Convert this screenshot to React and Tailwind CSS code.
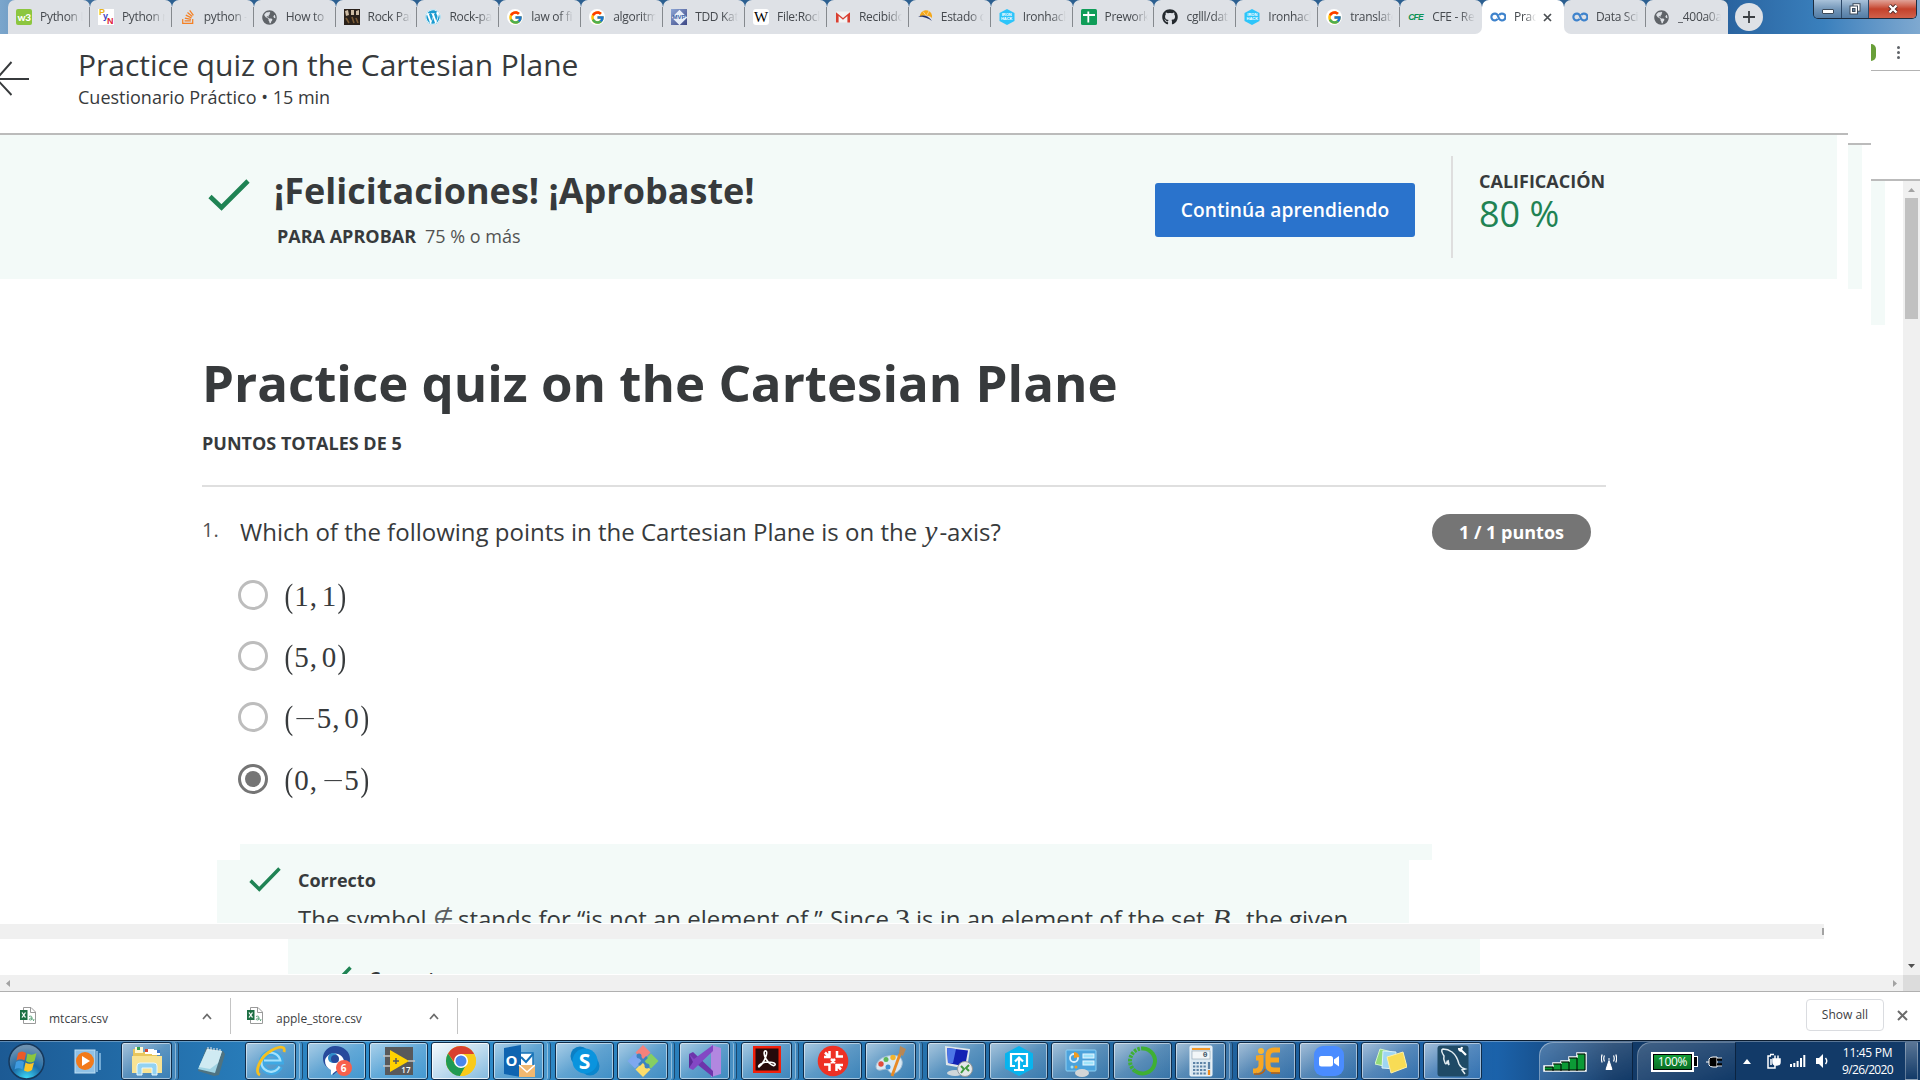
import React from 'react';
import { FcGoogle } from 'react-icons/fc';
import { FaGithub, FaWordpress, FaStackOverflow, FaGlobeAmericas } from 'react-icons/fa';

/* ---------- favicons ---------- */
const W3 = () => (
  <span className="flex size-4 items-center justify-center rounded-[2px] bg-[#8cc63f] font-['Lato'] text-[10px] font-black leading-none tracking-[-0.5px] text-white">w3</span>
);
const PyN = () => (
  <span className="relative block size-4 bg-white font-['Liberation_Sans'] text-[9px] font-bold leading-none">
    <span className="absolute left-[1px] top-[-1px] text-[#e8b51c]">P</span>
    <span className="absolute left-[5px] top-[3px] text-[#3b3fc4]">y</span>
    <span className="absolute left-[9px] top-[8px] text-[#e0203a]">N</span>
  </span>
);
const RockPic = () => (
  <svg className="size-4" viewBox="0 0 16 16">
    <rect width="16" height="16" fill="#2a211a" />
    <path d="M1 2l3-1 1 5-3 1z M7 1h3v5H7z M12 2l3-1v5h-3z" fill="#cdbca4" />
    <path d="M2 9l3 5M8 8l2 6M12 9l2 5" stroke="#7a5b36" strokeWidth="1.600" />
  </svg>
);
const Google = () => (
  <span className="flex size-4 items-center justify-center rounded-full bg-white"><FcGoogle className="size-[15px]" /></span>
);
const Mvp = () => (
  <span className="relative flex size-4 items-center justify-center bg-linear-to-br from-[#8ea6d6] to-[#3d4785]">
    <span className="absolute size-[11px] rotate-45 bg-[#e6edf8]" />
    <span className="relative font-['Liberation_Sans'] text-[6px] font-bold leading-none text-[#3d64a6]">MVP</span>
  </span>
);
const Wiki = () => (
  <span className="flex size-4 items-center justify-center rounded-[3px] bg-white font-['Liberation_Serif'] text-[15px] leading-none text-black">W</span>
);
const Gmail = () => (
  <svg className="size-4" viewBox="0 0 16 16">
    <rect x="1" y="2.500" width="14" height="11" fill="#f2f2f2" />
    <path d="M1 3.200L8 9l7-5.800V13.500h-2.600V7L8 10.800 3.600 7v6.500H1z" fill="#d93f31" />
  </svg>
);
const Estado = () => (
  <svg className="size-4" viewBox="0 0 16 16">
    <path d="M3 8a5.500 5.500 0 0 1 12-1.500V9C11.500 6 7 6 3 8z" fill="#f5a81c" />
    <path d="M6 2.500l3 4M12 2l-2 4" stroke="#fff" strokeWidth=".5" />
    <path d="M1 7.500c5-2 10-1.500 14 4.500-4-3-8-4.500-14-4.500z" fill="#1f2f6b" />
  </svg>
);
const Iron = () => (
  <span className="relative flex size-4 items-center justify-center">
    <svg className="absolute size-4" viewBox="0 0 16 16"><path d="M8 0l7.500 4v8L8 16 .5 12V4z" fill="#2dc5fa" /></svg>
    <span className="relative text-center font-['Liberation_Sans'] text-[4px] font-bold leading-[4px] text-white">IRON<br />HACK</span>
  </span>
);
const Sheet = () => (
  <svg className="size-4" viewBox="0 0 16 16"><rect width="16" height="16" rx="1.500" fill="#0f9d58" /><path d="M7.300 2.500v11M2 6h12" stroke="#fff" strokeWidth="1.800" /></svg>
);
const Cfe = () => (
  <span className="block w-4 font-['Liberation_Sans'] text-[8.500px] font-bold italic leading-4 tracking-[-0.700px] text-[#0a9153]">CFE</span>
);
const Coursera = () => (
  <svg className="size-4" viewBox="0 0 16 16" fill="none" stroke="#3f83cc" strokeWidth="2.200">
    <path d="M7.600 9.900A3.400 3.400 0 1 1 7.600 6.100L9.200 9.900A3.400 3.400 0 1 0 9.200 6.100" />
  </svg>
);
const Globe = () => <FaGlobeAmericas className="size-[15px] text-[#5f6368]" />;

const TABS = [
  ['Python L', <W3 />], ['Python n', <PyN />], ['python -', <FaStackOverflow className="size-4 text-[#f48024]" />],
  ['How to', <Globe />], ['Rock Pap', <RockPic />], ['Rock-pap', <FaWordpress className="size-4 rounded-full bg-white text-[#1b9bd0]" />],
  ['law of fi', <Google />], ['algoritm', <Google />], ['TDD Kata', <Mvp />], ['File:Rock', <Wiki />],
  ['Recibido', <Gmail />], ['Estado d', <Estado />], ['Ironhack', <Iron />], ['Prework', <Sheet />],
  ['cglll/dat', <FaGithub className="size-4 text-[#24292e]" />], ['Ironhack', <Iron />], ['translate', <Google />],
  ['CFE - Re', <Cfe />], ['Prac', <Coursera />], ['Data Sci', <Coursera />], ['_400a0a', <Globe />],
];
const ACTIVE = 18;

function Tab({ label, icon, i }) {
  const active = i === ACTIVE;
  const beside = i === ACTIVE - 1 || i === ACTIVE + 1;
  return (
    <div className={beside ? 'h-full w-[81.900px] shrink-0 bg-linear-to-b from-[#2c5f90] from-50% to-white to-50%' : 'h-full w-[81.900px] shrink-0'}>
      <div className={
        'flex h-full items-center rounded-t-[7px] pl-2 ' +
        (active ? 'bg-white' : 'bg-[#dee1e6]') +
        (i === ACTIVE - 1 ? ' rounded-br-[7px]' : '') + (i === ACTIVE + 1 ? ' rounded-bl-[7px]' : '')
      }>
        <span className="flex size-4 shrink-0 items-center justify-center">{icon}</span>
        <span className={
          'ml-2 overflow-hidden whitespace-nowrap text-[12px] leading-5 tracking-[-0.300px] text-[#45494e] ' +
          (active ? 'w-[22px] mask-r-from-50%' : 'w-[43px] mask-r-from-65%')
        }>{label}</span>
        {active && (
          <svg className="ml-[7px] size-[9px]" viewBox="0 0 9 9"><path d="M1 1l7 7M8 1L1 8" stroke="#4a4e52" strokeWidth="1.700" /></svg>
        )}
        {!active && i !== ACTIVE - 1 && i !== TABS.length - 1 && <span className="ml-auto h-5 w-px bg-[#85898e]" />}
      </div>
    </div>
  );
}

function TabStrip() {
  return (
    <div className="flex h-[34px] bg-linear-to-r from-[#7ba6cc] from-0% via-[#2c5f90] via-6% to-[#2c5f90]">
      <div className="w-[8px] shrink-0" />
      {TABS.map(([label, icon], i) => <Tab key={i} i={i} label={label} icon={icon} />)}
      <div className="flex flex-1 items-start bg-linear-to-r from-[#2a64a0] via-[#3a80bd] to-[#7fa9d0]">
        <span className="ml-[7px] mt-[3px] flex size-7 items-center justify-center rounded-full bg-[#dee1e6]">
          <svg className="size-3" viewBox="0 0 12 12"><path d="M6 0v12M0 6h12" stroke="#3b3f43" strokeWidth="1.800" /></svg>
        </span>
        <div className="ml-auto mr-[3px] flex h-[19px] w-[104px] overflow-hidden rounded-b-[5px] border border-t-0 border-[#1b2c40]">
          <span className="flex w-7 items-center justify-center border-r border-[#2b4767] bg-linear-to-b from-[#a9c2da] via-[#7497b9] via-50% to-[#537ca5]">
            <span className="mt-1 h-[5px] w-3 rounded-[1px] border border-[#3c4a5a] bg-white" />
          </span>
          <span className="flex w-[27px] items-center justify-center border-r border-[#2b4767] bg-linear-to-b from-[#a9c2da] via-[#7497b9] via-50% to-[#537ca5]">
            <svg className="size-3" viewBox="0 0 12 12"><rect x="4" y=".7" width="7" height="7.500" fill="#fff" stroke="#3c4a5a" /><rect x="1" y="3" width="7.500" height="8" fill="#fff" stroke="#3c4a5a" /><rect x="3.500" y="5.500" width="2.500" height="3" fill="#6c8aa8" stroke="#3c4a5a" /></svg>
          </span>
          <span className="flex flex-1 items-center justify-center bg-linear-to-b from-[#e0a298] via-[#c4412b] via-50% to-[#d0604a]">
            <svg className="size-3" viewBox="0 0 12 12"><path d="M2.500 2.500l7 7M9.500 2.500l-7 7" stroke="#4a2a2a" strokeWidth="4" /><path d="M2.500 2.500l7 7M9.500 2.500l-7 7" stroke="#fff" strokeWidth="2.400" /></svg>
          </span>
        </div>
      </div>
    </div>
  );
}

/* ---------- quiz page ---------- */
const Check = ({ className }) => (
  <svg className={className} viewBox="0 0 42 32" preserveAspectRatio="none" fill="none">
    <path d="M2 17.500L13.500 28.500 40 2" stroke="#1f8354" strokeWidth="4.600" />
  </svg>
);

const Paren = ({ children }) => <span className="inline-block w-[0.389em] text-center"><span className="inline-block origin-[50%_62%] scale-x-90 scale-y-[1.14]">{children}</span></span>;
const Digit = ({ children }) => <span className="inline-block w-[0.5em] text-center">{children}</span>;
const Comma = () => <span className="inline-block w-[0.445em] pl-[0.03em]">,</span>;
const Minus = () => <span className="inline-block w-[0.778em] text-center"><span className="inline-block origin-[50%_60%] scale-x-[1.3] scale-y-75">−</span></span>;
const Num = ({ n }) => (n < 0 ? <><Minus /><Digit>{-n}</Digit></> : <Digit>{n}</Digit>);

function Option({ x, y, checked }) {
  return (
    <div className="flex h-[61.400px] items-center">
      <span className={'flex size-[30px] items-center justify-center rounded-full border-[3px] ' + (checked ? 'border-[#757575]' : 'border-[#bdbdbd]')}>
        {checked && <span className="size-4 rounded-full bg-[#757575]" />}
      </span>
      <span className="ml-[15px] mt-[2px] whitespace-nowrap font-['Liberation_Serif'] text-[29px] leading-9">
        <Paren>(</Paren><Num n={x} /><Comma /><Num n={y} /><Paren>)</Paren>
      </span>
    </div>
  );
}

function Quiz() {
  return (
    <div className="flex h-full w-[1848px] flex-col overflow-hidden bg-white text-[#373a3c]">
      <div className="flex h-[101px] border-b-2 border-[#bbbbbb]">
        <svg className="mt-[26px] h-9 w-[79px] shrink-0" viewBox="0 0 79 36" fill="none" stroke="#373a3c" strokeWidth="1.900"><path d="M-6 19H29M11.500 2L-3.500 19 11.500 35" /></svg>
        <div className="-ml-px pt-[11px]">
          <h1 className="text-[30px] leading-10">Practice quiz on the Cartesian Plane</h1>
          <p className="text-[18px] leading-6">Cuestionario Práctico • 15 min</p>
        </div>
      </div>

      <div className="flex h-[144px] w-[1837px] bg-[#f3faf8]">
        <Check className="ml-[208px] mt-11 h-8 w-[42px]" />
        <div className="ml-6 w-[881px] pt-8">
          <h2 className="text-[36px] font-bold leading-[48px]">¡Felicitaciones! ¡Aprobaste!</h2>
          <p className="ml-[3px] mt-[9px] text-[18px] leading-6"><b>PARA APROBAR</b><span className="ml-[9px] text-[#525252]">75 % o más</span></p>
        </div>
        <button className="mt-12 h-[54px] w-[260px] rounded-[3px] bg-[#2a73cc] text-[19.200px] font-semibold text-white">Continúa aprendiendo</button>
        <div className="ml-9 mt-[21px] h-[102px] w-[2px] bg-[#dedede]" />
        <div className="ml-[26px] pt-[34px]">
          <div className="text-[18px] font-bold leading-6">CALIFICACIÓN</div>
          <div className="text-[36px] leading-[42px] text-[#1f8354]">80 %</div>
        </div>
      </div>

      <div className="ml-[202px] h-[565px] w-[1404px] pt-[73px]">
        <h2 className="text-[51px] font-bold leading-[60px]">Practice quiz on the Cartesian Plane</h2>
        <div className="mt-[19px] text-[18px] font-bold leading-6">PUNTOS TOTALES DE 5</div>
        <div className="mt-[30px] h-[2px] bg-[#dfdfdf]" />
        <div className="mt-[27px] flex h-9">
          <span className="w-[38px] text-[20px] leading-[31px] text-[#525252]">1.</span>
          <p className="text-[24px] leading-9">
            Which of the following points in the Cartesian Plane is on the <span className="inline-block w-[16px] pl-[1px] font-['Liberation_Serif'] text-[29px] italic leading-none">y</span>-axis?
          </p>
          <span className="ml-auto mr-[15px] flex h-9 w-[159px] items-center justify-center rounded-full bg-[#757575] text-[18px] font-bold text-white">1 / 1 puntos</span>
        </div>
        <div className="ml-[36px] mt-[14px]">
          <Option x={1} y={1} />
          <Option x={5} y={0} />
          <Option x={-5} y={0} />
          <Option x={0} y={-5} checked />
        </div>
      </div>

      <div className="ml-[240px] h-4 w-[1192px] bg-[#f3faf8]" />
      <div className="ml-[217px] flex h-[63px] w-[1192px] overflow-hidden bg-[#f3faf8]">
        <Check className="ml-8 mt-[7px] h-[25px] w-8 shrink-0" />
        <div className="ml-[17px] pt-2">
          <div className="text-[18px] font-bold leading-6">Correcto</div>
          <p className="mt-[9px] flex whitespace-nowrap text-[24px] leading-9">
            <span className="w-[135px]">The symbol</span>
            <span className="w-[25px] font-['DejaVu_Sans'] text-[24px] font-extralight italic text-[#5c5f61]">∉</span>
            <span className="w-[372px]">stands for “is not an element of.”</span>
            <span className="w-[65px]">Since</span>
            <span className="w-[21px] font-['Liberation_Serif'] text-[30px]">3</span>
            <span className="w-[296px]">is in an element of the set</span>
            <span className="w-[34px] font-['Liberation_Serif'] text-[30px] italic">B,</span>
            <span>the given</span>
          </p>
        </div>
      </div>

      <div className="mt-px flex h-[15px] w-[1824px] items-center justify-end bg-[#f0f0f0]">
        <span className="h-[7px] w-[2px] bg-[#a3a3a3]" />
      </div>
      <div className="ml-[288px] flex h-[35px] w-[1192px] overflow-hidden bg-[#f3faf8]">
        <Check className="ml-8 mt-[27px] h-[25px] w-8 shrink-0" />
        <div className="ml-[17px] mt-[27px] text-[18px] font-bold leading-6">Correcto</div>
      </div>
    </div>
  );
}

function BrowserEdge() {
  return (
    <>
      <div className="w-[23px] bg-white pt-[109px]">
        <div className="h-[2px] bg-[#bbbbbb]" />
        <div className="h-[144px] w-[14px] bg-[#f3faf8]" />
      </div>
      <div className="flex flex-1 flex-col bg-white">
        <div className="flex h-[37px] items-center border-b border-[#b3b3b3]">
          <span className="h-[17px] w-[5px] rounded-r-full bg-[#689f38]" />
          <span className="ml-[21px] flex flex-col gap-[2px]">
            <i className="size-[3px] rounded-full bg-[#5f6368]" /><i className="size-[3px] rounded-full bg-[#5f6368]" /><i className="size-[3px] rounded-full bg-[#5f6368]" />
          </span>
        </div>
        <div className="mt-[108px] h-[2px] bg-[#bbbbbb]" />
        <div className="flex flex-1">
          <div className="h-[144px] w-[14px] bg-[#f3faf8]" />
          <div className="ml-auto flex w-[17px] flex-col items-center bg-[#f0f0f0]">
            <svg className="mt-[7px] h-1 w-[7px]" viewBox="0 0 7 4"><path d="M3.500 0L7 4H0z" fill="#a3a3a3" /></svg>
            <div className="mt-[6px] h-[121px] w-[13px] bg-[#c1c1c1]" />
            <svg className="mb-[7px] mt-auto h-1 w-[7px]" viewBox="0 0 7 4"><path d="M0 0h7L3.500 4z" fill="#505050" /></svg>
          </div>
        </div>
      </div>
    </>
  );
}

/* ---------- downloads ---------- */
const Csv = () => (
  <svg className="h-[17px] w-4" viewBox="0 0 16 17">
    <path d="M3.500.5h7.500l4.500 4.500v11.500h-12z" fill="#fff" stroke="#9a9a9a" />
    <path d="M10.500.5v5h5" fill="none" stroke="#9a9a9a" />
    <rect y="3" width="7.500" height="10" fill="#1d7044" />
    <path d="M2 5.500l3.500 5M5.500 5.500L2 10.500" stroke="#fff" strokeWidth="1.300" />
    <path d="M9 9.500c3-1 3 0 3 3.500M12 11c-3 0-3.500 2-1.500 2 1 0 1.500-.8 1.500-1.500M14 12l-.6 2" fill="none" stroke="#4c9a6d" strokeWidth=".9" />
  </svg>
);
function Download({ name, first }) {
  return (
    <div className={'flex h-9 items-start border-r border-[#c4c4c4] ' + (first ? 'w-[231px] pl-5' : 'w-[227px] pl-4')}>
      <span className="mt-[9px]"><Csv /></span>
      <span className="ml-[13px] mt-[11px] text-[12px] leading-5 text-[#3c4043]">{name}</span>
      <svg className="ml-auto mr-[18px] mt-[15px] h-[7px] w-[10px]" viewBox="0 0 10 7" fill="none"><path d="M1 6l4-4.500L9 6" stroke="#6b6b6b" strokeWidth="1.700" /></svg>
    </div>
  );
}

/* ---------- taskbar ---------- */
const T = ({ children }) => <svg className="size-8" viewBox="0 0 32 32" fill="none">{children}</svg>;
const Media = () => <T><rect x="4" y="5" width="20" height="23" fill="#8fc1e6" stroke="#bfe0f5" /><path d="M26 6v21M29 8v17" stroke="#8fc1e6" strokeWidth="1.500" /><circle cx="14" cy="16" r="9" fill="#f27a1a" /><path d="M11 11l8 5-8 5z" fill="#fff" /></T>;
const Explorer = () => <T><path d="M2 4h8l2 3h14v4h4v16H2z" fill="#e9c65c" /><rect x="4" y="2" width="8" height="6" fill="#fff7cf" /><rect x="6" y="2" width="3" height="3" fill="#34a04b" /><rect x="14" y="4" width="9" height="5" fill="#fff" /><rect x="14" y="4" width="3" height="3" fill="#d8442e" /><rect x="21" y="5" width="8" height="5" fill="#fff" /><rect x="26" y="5" width="3" height="3" fill="#3a74c8" /><path d="M1 11h30v17H1z" fill="#f8e394" /><path d="M6 30v-9q0-3 3-3h14q3 0 3 3v9h-5v-7H11v7z" fill="#93d2f2" stroke="#e6f7ff" /></T>;
const Notepad = () => <T><path d="M11 3l17 3 2 3-6 21-5 1-16-5z" fill="#4f7381" /><path d="M12 4l15 2-7 22L3 24z" fill="#9fd3e3" /><path d="M12 4l15 2-4 12-8 6-11-2z" fill="#cfeaf2" /><path d="M13 2v4M16 2v4M19 3v3M22 3v3M25 4v3" stroke="#e9eef0" /></T>;
const Ie = () => <T><path d="M25 21.500a9.500 9.500 0 1 1 .8-5H9" stroke="#3fa9e4" strokeWidth="6" /><path d="M24.500 21.500a9.500 9.500 0 1 1 .8-6H9" stroke="#a5e1fb" strokeWidth="2.200" /><path d="M5 30C-1 27 5 13 14 7S31 0 29 7" stroke="#f5bf1f" strokeWidth="2.800" /></T>;
const Teams = () => (
  <span className="relative block size-8"><T><path d="M14 1c9 0 15 6 15 13s-5 11-11 11l-6 5V25C5 23 2 19 2 13S7 1 14 1z" fill="#274a9c" /><path d="M10 9c8-2 14 3 13 10s-5 7-8 7l-5 4v-5c-4-2-6-5-6-9 0-3 3-6 6-7z" fill="#fff" /><circle cx="12" cy="13" r="5" fill="#2f8bc9" /><circle cx="14" cy="14" r="4" fill="#274a9c" /></T>
    <span className="absolute left-[15px] top-[15px] flex size-4 items-center justify-center rounded-full bg-[#f8604c] text-[10px] font-bold leading-none text-white">6</span></span>
);
const LabView = () => (
  <span className="relative block size-8"><T><rect x="2" y="2" width="28" height="28" fill="#58595b" /><path d="M0 11h8M0 21h8M25 16h7" stroke="#c4c4c4" strokeWidth="1.500" /><path d="M7 5l19 11L7 27z" fill="#ffd200" /><path d="M10 16h6M13 13v6" stroke="#58595b" strokeWidth="1.500" /></T>
    <span className="absolute bottom-[3px] right-[4px] text-[8px] font-semibold leading-none text-white">17</span></span>
);
const Chrome = () => <T><circle cx="16" cy="16" r="15" fill="#f8ca1b" /><path d="M3 8.500A15 15 0 0 1 29 8.500L22 16 10 18z" fill="#d9402f" /><path d="M3 8.500A15 15 0 0 0 15 31l6.500-12H10z" fill="#1f9a53" /><path d="M16 9h13.200A15 15 0 0 1 15 31l6.500-11z" fill="#f8ca1b" /><circle cx="16" cy="16" r="7" fill="#fff" /><circle cx="16" cy="16" r="5.500" fill="#4a86ec" /></T>;
const Outlook = () => (
  <span className="relative block size-8"><T><path d="M15 8h15v15H15z" fill="#fff" stroke="#1572b8" strokeWidth="1.500" /><path d="M18 12l5 5 7-8" stroke="#1572b8" strokeWidth="2" /><path d="M1 3l17-3v32L1 29z" fill="#0f64b0" /><path d="M16 20h16v12H16z" fill="#f1b870" /><path d="M16 20l8 7 8-7" stroke="#fff" strokeWidth="1.500" /></T>
    <span className="absolute left-[3px] top-[8px] font-['Open_Sans'] text-[15px] font-bold leading-none text-white">O</span></span>
);
const Skype = () => (
  <span className="relative flex size-8 items-center justify-center"><svg className="absolute size-8" viewBox="0 0 32 32"><circle cx="11" cy="11" r="9.500" fill="#0b7fc4" /><circle cx="21" cy="21" r="9.500" fill="#0b86cd" /><circle cx="16" cy="16" r="12.500" fill="#0a94de" /></svg>
    <span className="relative text-[21px] font-bold leading-none text-white">S</span></span>
);
const Git = () => <T><path d="M16 0l7.500 7.500L16 15 8.500 7.500z" fill="#f4827c" /><path d="M8 8.500l7.500 7.500L8 23.500.5 16z" fill="#7ea8f0" /><path d="M24 8.500l7.500 7.500-7.500 7.500-7.500-7.500z" fill="#86cf62" /><path d="M16 17l7.500 7.500L16 32l-7.500-7.500z" fill="#fbdc6b" /><path d="M12 11l8 10M20 12l-8 8" stroke="#3d83c0" strokeWidth="2.500" /><circle cx="12" cy="11" r="2.500" fill="#3d83c0" /><circle cx="20" cy="21" r="2.500" fill="#3d83c0" /></T>;
const Vs = () => <T><path d="M22 0l10 3v26l-10 3z" fill="#b287e0" /><path d="M0 9l4-2 20 19v6L4 16l-4 7z" fill="#6d35ab" /><path d="M0 23l4 2L24 6V0L5 14 0 9z" fill="#8347c4" /><path d="M0 9v14l4-6z" fill="#5c2b98" /></T>;
const Acrobat = () => <T><rect x="2" y="1" width="28" height="27" fill="#f0200c" /><rect x="4.500" y="3.500" width="23" height="22" fill="#270a0b" /><path d="M8 22c-2-2 5-5 9-5s8 1 7 3-6-1-9-6-2-9 0-8-1 11-7 16z" stroke="#fff" strokeWidth="1.600" /></T>;
const RedStar = () => <T><circle cx="16" cy="16" r="15.300" fill="#ee3124" /><path d="M7 12h5.500V6M12.500 12L8 7.500M20 6v5.500h6M7 19.500h5.500V26M19.500 26v-6H26M19.500 20l4.500 4.500M14 14l4 4M18 14l-4 4" stroke="#fff" strokeWidth="2.500" /></T>;
const Paint = () => <T><path d="M1 21C3 12 14 9 23 11c7 3 5 14-3 17-6 2-6-4-9-4S1 28 1 21z" fill="#d9e9f4" stroke="#a5bfd3" /><circle cx="6" cy="19" r="2.700" fill="#e14b3b" /><circle cx="11" cy="14.500" r="2.500" fill="#5db65a" /><circle cx="18" cy="12.500" r="2.700" fill="#f4b52c" /><circle cx="13" cy="22" r="2.500" fill="#3f8fd2" /><path d="M17 31L25 9" stroke="#e88a25" strokeWidth="2.800" /><path d="M24 9l1-8 6 3-3 7z" fill="#b78756" /></T>;
const Rdp = () => <T><path d="M4 1l25 3-3 20-21-4z" fill="#dfe6ea" /><path d="M6 3l21 2.500-3 16L7 18z" fill="#1221b4" /><path d="M6 3l9 1-3 14-5 0z" fill="#4d76e8" /><ellipse cx="14" cy="28" rx="8" ry="3" fill="#cfd6da" /><circle cx="24" cy="24" r="7.500" fill="#e4e7e8" stroke="#909699" /><path d="M20 21l3 3-3 4M28 20l-3 3 3 3" stroke="#3f9a3f" strokeWidth="2" /></T>;
const Cloud = () => <T><path d="M16 1l14 7.500v15L16 31 2 23.500v-15z" fill="#08b4ee" /><path d="M12 21H8V9h16v12h-4M16 25V13M12 16.500l4-4 4 4M11 25h10" stroke="#fff" strokeWidth="2.200" /></T>;
const Panel = () => <T><rect x="1" y="5" width="30" height="21" rx="1" fill="#4ca3dc" stroke="#8ed0f3" /><circle cx="9" cy="13" r="4" stroke="#dceffa" strokeWidth="1.800" /><path d="M9 13V7a6 6 0 0 1 5.500 5z" fill="#f29c1f" /><rect x="18" y="9" width="11" height="4" fill="#9fe3fb" stroke="#e6f7ff" /><rect x="18" y="16" width="11" height="4" fill="#9fe3fb" stroke="#e6f7ff" /><circle cx="7" cy="22" r="1.500" fill="#9fe3fb" /><circle cx="11" cy="22" r="1.500" fill="#f29c1f" /><ellipse cx="17" cy="28" rx="7" ry="4" fill="#d4d6d7" /></T>;
const Ring = () => <T><path d="M16 3.500A12.500 12.500 0 1 1 8 26" stroke="#3fb034" strokeWidth="4" /><path d="M8 26A12.500 12.500 0 0 1 16 3.500" stroke="#3fb034" strokeWidth="4" strokeDasharray="2.500 1.200" /></T>;
const Calc = () => (
  <span className="relative block size-8"><T><rect x="5" y="1" width="22" height="30" rx="1" fill="#dbe8f1" stroke="#f2f8fb" /><rect x="7" y="3" width="18" height="2" fill="#f39a2b" /><rect x="7" y="6" width="18" height="8" fill="#f2f6f8" stroke="#8fa3b3" strokeWidth=".6" /><path d="M8 18h13M8 21.500h13M8 25h13M8 28.500h13" stroke="#5c82a6" strokeWidth="2.200" strokeDasharray="2.300 1.200" /><path d="M24 17v7" stroke="#5c82a6" strokeWidth="2.200" /><path d="M24 25v5" stroke="#ef8a1d" strokeWidth="2.200" /></T>
    <span className="absolute right-[9px] top-[6px] font-['Liberation_Mono'] text-[8px] font-bold leading-none text-[#3c5264]">0</span></span>
);
const Je = () => <T><circle cx="10" cy="6" r="3" fill="#f7b733" /><path d="M10 10v10q0 5-5 6M2 26h3M5 13h6" stroke="#f7a623" strokeWidth="5" /><path d="M29 5h-6q-6 0-6 6v9q0 5 6 5h6M17 15h11" stroke="#f7a623" strokeWidth="5" /><path d="M3 29h5q5-1 6-5M20 28h9" stroke="#b8600f" strokeWidth="1.500" /></T>;
const Zoom = () => <T><rect x="1" y="1" width="30" height="30" rx="9" fill="#4a8cff" /><rect x="6" y="11" width="14" height="10.500" rx="2.500" fill="#fff" /><path d="M21 14.500l5-3.500v10.500l-5-3.500z" fill="#fff" /></T>;
const Notes = () => <T><path d="M5 4l12 3-4 15-13-3z" fill="#93db7c" stroke="#d6f5c6" /><path d="M8 6l13 1-1 17-13-1z" fill="#9fd6f2" stroke="#daf1fb" /><path d="M12 12l16-5 4 15-16 6z" fill="#f8dc55" stroke="#fdf0a8" /></T>;
const MySql = () => <T><rect x=".5" y=".5" width="31" height="31" rx="3" fill="#1f4a66" /><path d="M11 15l1 5-2-3q-1 3-2 1-2-4-1-7Q3 5 6 4q5 0 9 3 5 4 7 12 2 4 6 5l-3 1 3 4" stroke="#e3edf2" strokeWidth="1.500" /><path d="M22 3q0 3 3 3l4 4M25 2l-1 3" stroke="#fff" strokeWidth="2.200" /></T>;

/* kind: 0 = pinned only, 1 = one window, 2 = window group, 3 = focused */
const APPS = [
  [Media, 0], [Explorer, 2], [Notepad, 0], [Ie, 2], [Teams, 1], [LabView, 1], [Chrome, 3], [Outlook, 2], [Skype, 1], [Git, 2],
  [Vs, 2], [Acrobat, 2], [RedStar, 1], [Paint, 2], [Rdp, 1], [Cloud, 1], [Panel, 1], [Ring, 1], [Calc, 2], [Je, 1], [Zoom, 1], [Notes, 1], [MySql, 1],
];
const FRAME = {
  0: 'w-[56px]',
  1: 'w-[59px] rounded-[3px] border border-[#0f2c4a] inset-ring inset-ring-white/50 bg-linear-to-br from-white/60 via-white/25 to-white/10',
  2: 'w-[51px] rounded-[3px] border border-[#0f2c4a] inset-ring inset-ring-white/50 bg-linear-to-br from-white/60 via-white/25 to-white/10',
  3: 'w-[59px] rounded-[3px] border border-[#0f2c4a] inset-ring inset-ring-white/80 bg-linear-to-br from-white/95 via-white/70 to-white/40',
};

function Tray() {
  return (
    <div className="ml-auto flex h-full text-white">
      <div className="flex w-[94px] items-center rounded-tl-[14px] border-l border-t border-r border-l-white/40 border-t-white/40 border-r-[#0b2340] bg-linear-to-br from-white/25 to-white/0 pl-[3px]">
        <svg className="h-5 w-[44px]" viewBox="0 0 44 20"><path d="M1 19v-5h9v-3h8V9h8V5h8V1h9v18z" fill="#0c9a36" stroke="#fff" strokeWidth="1.500" /><path d="M2 15h8v4M10 12h8v7M18 10h8v9M26 6h8v13M34 2h8v16H2" fill="none" stroke="#000" /></svg>
        <svg className="ml-[14px] h-4 w-4" viewBox="0 0 16 16" fill="none" stroke="#fff"><path d="M8 4v2M5 15.500l3-9 3 9z" fill="#fff" /><path d="M3.500 1.500q-1.500 3 0 6M1.200.5q-1.700 4 0 8M12.500 1.500q1.500 3 0 6M14.800.5q1.700 4 0 8" strokeWidth="1.200" /></svg>
      </div>
      <div className="ml-1 flex w-[99px] items-center rounded-tl-[14px] border-l border-t border-r border-l-white/30 border-t-white/30 border-r-[#0b2340] bg-linear-to-br from-white/20 to-white/0 pl-[13px]">
        <span className="flex h-5 w-[43px] items-center justify-center border-2 border-white bg-linear-to-b from-[#14a03a] to-[#0a6d24] text-[12px] leading-none tracking-[-0.300px] outline-1 -outline-offset-3 outline-black">100%</span>
        <span className="h-[11px] w-1 border border-l-0 border-white bg-black" />
        <svg className="ml-[8px] h-3 w-4" viewBox="0 0 16 12"><path d="M0 6h3V3q1-2 4-2h4v10H7q-3 0-4-2V6" fill="#000" stroke="#fff" strokeWidth="1" /><path d="M11 3.500h5M11 8.500h5" stroke="#000" strokeWidth="2.500" /><path d="M11 2h5M11 10h5" stroke="#fff" strokeWidth=".8" /></svg>
      </div>
      <div className="flex items-center pl-[7px]">
        <svg className="h-[5px] w-[8px]" viewBox="0 0 8 5"><path d="M4 0l4 5H0z" fill="#fff" /></svg>
        <svg className="ml-[16px] h-4 w-[14px]" viewBox="0 0 14 16" fill="none" stroke="#fff" strokeWidth="1.500"><path d="M4 3H1v12h7v-3M3 1.500h4" /><path d="M6 6h7v3q0 3-3 3H9q-3 0-3-3z" fill="#fff" /><path d="M8 6V2.500M11 6V2.500M4 6v6" /></svg>
        <svg className="ml-[9px] h-3 w-4" viewBox="0 0 16 12"><path d="M0 9h2v3H0zM3.300 8h2v4h-2zM6.600 6h2v6h-2zM10 3h2v9h-2zM13.300 0h2v12h-2z" fill="#fff" /></svg>
        <svg className="ml-[10px] h-[14px] w-[13px]" viewBox="0 0 13 14"><path d="M0 4h3l4-4v14l-4-4H0z" fill="#fff" /><path d="M9.500 4q2.500 3 0 6" fill="none" stroke="#fff" strokeWidth="1.400" /></svg>
      </div>
      <div className="w-[76px] pl-px pt-[2px] text-center text-[12px] leading-[17px]">
        <div className="tracking-[-0.300px]">11:45 PM</div>
        <div className="tracking-[-0.650px]">9/26/2020</div>
      </div>
      <div className="mr-[2px] h-full w-[13px] border border-white/30 bg-linear-to-b from-white/30 to-transparent" />
    </div>
  );
}

function Taskbar() {
  return (
    <div className="flex h-10 border-t border-[#0c1d30] bg-linear-to-r from-[#1c5a94] via-[#2f8fce] via-20% to-[#143f72]">
      <div className="flex h-full flex-1 border-t border-white/30 bg-linear-to-r from-transparent from-60% via-[#1b62aa] via-78% to-[#123a68] to-84%">
        <div className="flex w-[59px] shrink-0 items-center pl-[8px]">
          <svg className="size-[37px]" viewBox="0 0 37 37">
            <defs><radialGradient id="orb" cx=".5" cy="1" r=".9"><stop offset="0" stopColor="#3fe0fb" /><stop offset=".5" stopColor="#1b6ba8" /><stop offset="1" stopColor="#6d91b0" /></radialGradient></defs>
            <circle cx="18.500" cy="18.500" r="17.500" fill="url(#orb)" stroke="#16385c" strokeWidth="1.500" />
            <path d="M10 10q4-3 8 0l-1.500 7.500q-4-2.500-8 0z" fill="#ec5a28" />
            <path d="M19.500 10.500q4 2.500 9-.5l-2 8q-4 3-8.500 0z" fill="#8cc63e" />
            <path d="M8 19q4-2.500 8 0l-1.500 7.500q-4-2.500-8 0z" fill="#3f9be0" />
            <path d="M17.500 19.500q4 2.500 8.500 0l-2 7.500q-4 3-8 .5z" fill="#fcc526" />
          </svg>
        </div>
        {APPS.map(([Icon, kind], i) => (
          <div key={i} className="flex h-full w-[62px] shrink-0">
            <div className={'flex h-[38px] shrink-0 items-center justify-center ' + FRAME[kind]}><Icon /></div>
            {kind === 2 && <><span className="h-[38px] w-1 rounded-r-[3px] border-r border-white/40 bg-white/15" /><span className="h-[38px] w-[3px] rounded-r-[3px] border-r border-[#0f2c4a]/70 bg-white/10" /></>}
          </div>
        ))}
        <Tray />
      </div>
    </div>
  );
}

export default function App() {
  return (
    <div className="flex h-[1080px] w-[1920px] flex-col overflow-hidden bg-white font-['Open_Sans',sans-serif]">
      <TabStrip />
      <div className="flex h-[941px]">
        <Quiz />
        <BrowserEdge />
      </div>
      <div className="flex h-4 items-center bg-[#f0f0f0]">
        <svg className="ml-[6px] h-[7px] w-1" viewBox="0 0 4 7"><path d="M4 0v7L0 3.500z" fill="#a3a3a3" /></svg>
        <svg className="ml-auto mr-[6px] h-[7px] w-1" viewBox="0 0 4 7"><path d="M0 0v7l4-3.500z" fill="#a3a3a3" /></svg>
        <div className="h-full w-[17px] bg-[#dcdcdc]" />
      </div>
      <div className="flex h-[49px] border-t border-[#b0b0b0] bg-white pt-[6px]">
        <Download name="mtcars.csv" first />
        <Download name="apple_store.csv" />
        <button className="ml-auto mt-px h-8 w-[78px] rounded-[4px] border border-[#dadce0] text-[12px] text-[#3c4043]">Show all</button>
        <svg className="ml-[13px] mr-3 mt-[12px] size-[11px]" viewBox="0 0 11 11"><path d="M1 1l9 9M10 1l-9 9" stroke="#6b6b6b" strokeWidth="2" /></svg>
      </div>
      <Taskbar />
    </div>
  );
}
